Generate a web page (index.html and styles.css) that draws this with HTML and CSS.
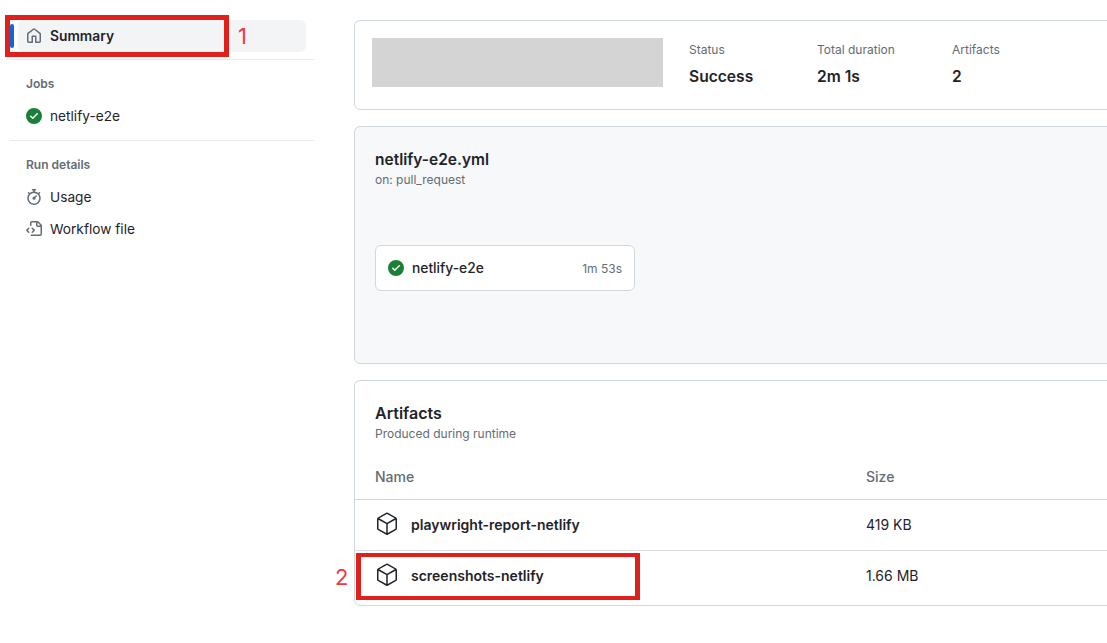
FILE: index.html
```html
<!DOCTYPE html>
<html lang="en">
<head>
<meta charset="utf-8">
<title>Workflow run summary</title>
<link rel="stylesheet" href="styles.css">
</head>
<body>
<div class="page">
  <nav class="sidebar">
    <div class="section section-first">
      <a class="nav-item active">
        <span class="marker"></span>
        <svg class="icon muted" viewBox="0 0 16 16"><path d="M6.906.664a1.749 1.749 0 0 1 2.187 0l5.25 4.2c.415.332.657.835.657 1.367v7.019A1.75 1.75 0 0 1 13.25 15h-3.5a.75.75 0 0 1-.75-.75V9H7v5.25a.75.75 0 0 1-.75.75h-3.5A1.75 1.75 0 0 1 1 13.25V6.23c0-.531.242-1.034.657-1.366l5.25-4.2Zm1.25 1.171a.25.25 0 0 0-.312 0l-5.25 4.2a.25.25 0 0 0-.094.196v7.019c0 .138.112.25.25.25H5.5V8.25a.75.75 0 0 1 .75-.75h3.5a.75.75 0 0 1 .75.75v5.25h2.75a.25.25 0 0 0 .25-.25V6.23a.25.25 0 0 0-.094-.195Z"/></svg>
        <span>Summary</span>
      </a>
    </div>
    <div class="section section-jobs">
      <h2 class="section-title">Jobs</h2>
      <a class="nav-item">
        <svg class="icon success" viewBox="0 0 16 16"><path d="M8 16A8 8 0 1 1 8 0a8 8 0 0 1 0 16Zm3.78-9.72a.751.751 0 0 0-.018-1.042.751.751 0 0 0-1.042-.018L6.75 9.19 5.28 7.72a.751.751 0 0 0-1.042.018.751.751 0 0 0-.018 1.042l2 2a.75.75 0 0 0 1.06 0Z"/></svg>
        <span>netlify-e2e</span>
      </a>
    </div>
    <div class="section">
      <h2 class="section-title">Run details</h2>
      <a class="nav-item">
        <svg class="icon muted" viewBox="0 0 16 16"><path d="M5.75.75A.75.75 0 0 1 6.5 0h3a.75.75 0 0 1 0 1.5h-.75v1l-.001.041a6.724 6.724 0 0 1 3.464 1.435l.007-.006.75-.75a.75.75 0 1 1 1.06 1.06l-.75.75-.006.007a6.75 6.75 0 1 1-10.548 0L2.72 5.03l-.75-.75a.75.75 0 0 1 1.06-1.06l.75.75.007.006A6.72 6.72 0 0 1 7.25 2.541V1.5H6.5a.75.75 0 0 1-.75-.75ZM8 14.5A5.25 5.25 0 1 0 8 4a5.25 5.25 0 0 0 0 10.5Zm.389-6.7 1.33-1.33a.75.75 0 1 1 1.061 1.06L9.45 8.861A1.503 1.503 0 0 1 8 10.75a1.499 1.499 0 1 1 .389-2.95Z"/></svg>
        <span>Usage</span>
      </a>
      <a class="nav-item">
        <svg class="icon muted" viewBox="0 0 16 16"><path d="M4 1.75C4 .784 4.784 0 5.75 0h5.586c.464 0 .909.184 1.237.513l2.914 2.914c.329.328.513.773.513 1.237v8.586A1.75 1.75 0 0 1 14.25 15h-9a.75.75 0 0 1 0-1.5h9a.25.25 0 0 0 .25-.25V6h-2.75A1.75 1.75 0 0 1 10 4.25V1.5H5.75a.25.25 0 0 0-.25.25v2.5a.75.75 0 0 1-1.5 0Zm1.72 4.97a.75.75 0 0 1 1.06 0l2 2a.75.75 0 0 1 0 1.06l-2 2a.749.749 0 0 1-1.275-.326.749.749 0 0 1 .215-.734l1.47-1.47-1.47-1.47a.75.75 0 0 1 0-1.06ZM3.28 7.78 1.81 9.25l1.47 1.47a.751.751 0 0 1-.018 1.042.751.751 0 0 1-1.042.018l-2-2a.75.75 0 0 1 0-1.06l2-2a.751.751 0 0 1 1.042.018.751.751 0 0 1 .018 1.042Zm8.22-6.218V4.25c0 .138.112.25.25.25h2.688l-.011-.013-2.914-2.914-.013-.011Z"/></svg>
        <span>Workflow file</span>
      </a>
    </div>
  </nav>

  <main class="content">
    <section class="card summary">
      <div class="redacted"></div>
      <dl class="stat stat-status"><dt>Status</dt><dd>Success</dd></dl>
      <dl class="stat stat-duration"><dt>Total duration</dt><dd>2m 1s</dd></dl>
      <dl class="stat"><dt>Artifacts</dt><dd>2</dd></dl>
    </section>

    <section class="card graph">
      <h3 class="graph-title">netlify-e2e.yml</h3>
      <p class="subtitle">on: pull_request</p>
      <div class="job">
        <svg class="icon success" viewBox="0 0 16 16"><path d="M8 16A8 8 0 1 1 8 0a8 8 0 0 1 0 16Zm3.78-9.72a.751.751 0 0 0-.018-1.042.751.751 0 0 0-1.042-.018L6.75 9.19 5.28 7.72a.751.751 0 0 0-1.042.018.751.751 0 0 0-.018 1.042l2 2a.75.75 0 0 0 1.06 0Z"/></svg>
        <span class="job-name">netlify-e2e</span>
        <span class="job-time">1m 53s</span>
      </div>
    </section>

    <section class="card artifacts">
      <div class="artifacts-head">
        <h3 class="artifacts-title">Artifacts</h3>
        <p class="subtitle">Produced during runtime</p>
      </div>
      <div class="row row-head"><span class="col-name">Name</span><span>Size</span></div>
      <div class="row row-item">
        <span class="col-name name-cell">
          <svg class="package" viewBox="0 0 24 24"><path d="M12.876.64V.639l8.25 4.763c.541.313.875.89.875 1.515v9.525a1.75 1.75 0 0 1-.875 1.516l-8.25 4.762a1.748 1.748 0 0 1-1.75 0l-8.25-4.763a1.75 1.75 0 0 1-.875-1.515V6.917c0-.625.334-1.202.875-1.515L11.126.64a1.748 1.748 0 0 1 1.75 0Zm-1 1.298L4.251 6.34l7.75 4.474 7.75-4.474-7.625-4.402a.248.248 0 0 0-.25 0Zm.875 19.123 7.625-4.402a.25.25 0 0 0 .125-.216V7.639l-7.75 4.474ZM3.501 7.64v8.803c0 .09.048.172.125.216l7.625 4.402v-8.947Z"/></svg>
          <span>playwright-report-netlify</span>
        </span>
        <span>419 KB</span>
      </div>
      <div class="row row-item row-last">
        <span class="col-name name-cell">
          <svg class="package" viewBox="0 0 24 24"><path d="M12.876.64V.639l8.25 4.763c.541.313.875.89.875 1.515v9.525a1.75 1.75 0 0 1-.875 1.516l-8.25 4.762a1.748 1.748 0 0 1-1.75 0l-8.25-4.763a1.75 1.75 0 0 1-.875-1.515V6.917c0-.625.334-1.202.875-1.515L11.126.64a1.748 1.748 0 0 1 1.75 0Zm-1 1.298L4.251 6.34l7.75 4.474 7.75-4.474-7.625-4.402a.248.248 0 0 0-.25 0Zm.875 19.123 7.625-4.402a.25.25 0 0 0 .125-.216V7.639l-7.75 4.474ZM3.501 7.64v8.803c0 .09.048.172.125.216l7.625 4.402v-8.947Z"/></svg>
          <span>screenshots-netlify</span>
        </span>
        <span>1.66 MB</span>
      </div>
    </section>
  </main>

  <div class="callout-box box-one"></div>
  <div class="callout-num num-one">1</div>
  <div class="callout-box box-two"></div>
  <div class="callout-num num-two">2</div>
</div>
</body>
</html>
```

FILE: styles.css
```css
* { box-sizing: border-box; }
html, body { margin: 0; padding: 0; height: 100%; overflow: hidden; background: #fff; }
body { font-family: Inter, "Liberation Sans", sans-serif; font-size: 14px; color: #1f2328; }

.page { position: relative; display: flex; gap: 40px; width: 1107px; height: 643px; padding-top: 20px; overflow: hidden; }

.sidebar { flex: 0 0 314px; padding-left: 10px; }
.section { border-top: 1px solid #e8eaed; padding: 16px 0 7px; }
.section-first { border-top: 0; padding: 0 8px 7px 0; }
.section-jobs { padding-bottom: 8px; }
.section-title { margin: 0 0 8px 16px; font-size: 12px; line-height: 16px; font-weight: 600; color: #636c76; }

.nav-item { position: relative; display: flex; align-items: center; gap: 8px; height: 32px; margin-left: 8px; padding-left: 8px; border-radius: 6px; font-size: 13.7px; line-height: 20px; }
.active { background: #f3f4f6; font-size: 13.8px; font-weight: 600; }
.marker { position: absolute; left: -8px; top: 4px; width: 4px; height: 24px; border-radius: 2px; background: #1565d8; }

.icon { width: 16px; height: 16px; flex: none; fill: currentColor; }
.muted { color: #636c76; }
.success { color: #1a7f37; }

.content { flex: 0 0 830px; }
.card { border: 1px solid #d0d7de; border-radius: 6px; margin-bottom: 16px; }

.summary { display: flex; height: 90px; padding: 17px; }
.redacted { width: 291px; height: 49px; background: #d4d4d4; margin-right: 26px; }
.stat { margin: 0; padding-top: 4px; width: 128px; }
.stat-duration { width: 135px; }
.stat dt { font-size: 12px; line-height: 16px; color: #636c76; }
.stat dd { margin: 9px 0 0; font-size: 15.6px; line-height: 20px; font-weight: 600; }

.graph { height: 238px; padding: 23px 20px 0; background: #f6f8fa; }
.graph-title { margin: 0; font-size: 15.5px; line-height: 20px; font-weight: 600; }
.subtitle { margin: 1px 0 0; font-size: 12px; line-height: 20px; color: #636c76; }
.graph .subtitle { margin-top: 0; }
.job { display: flex; align-items: center; gap: 8px; width: 260px; height: 46px; margin-top: 55px; padding: 0 12px; background: #fff; border: 1px solid #d0d7de; border-radius: 6px; }
.job-name { flex: 1; font-size: 13.8px; font-weight: 500; }
.job-time { font-size: 12px; color: #636c76; }

.artifacts { height: 226px; margin-bottom: 0; }
.artifacts-head { padding: 22px 20px 0; height: 74px; }
.artifacts-title { margin: 0; font-size: 16px; line-height: 20px; font-weight: 600; }
.row { display: flex; align-items: center; padding-left: 20px; }
.col-name { flex: 0 0 491px; }
.row-head { height: 45px; padding-bottom: 1px; border-bottom: 1px solid #d0d7de; color: #636c76; font-weight: 500; }
.row-item { height: 51px; padding-bottom: 2px; border-bottom: 1px solid #d8dee4; }
.row-last { height: 50px; border-bottom: 0; }
.name-cell { display: flex; align-items: center; gap: 12px; font-weight: 600; }
.package { width: 24px; height: 24px; flex: none; fill: #1f2328; }

.callout-box { position: absolute; border-style: solid; border-color: #e0201b; }
.box-one { left: 5px; top: 15px; width: 224px; height: 42px; border-width: 5px; }
.box-two { left: 356px; top: 553px; width: 284px; height: 47px; border-width: 4px 5px; }
.callout-num { position: absolute; font-size: 22px; line-height: 26px; color: #f4373b; }
.num-one { left: 238px; top: 23px; }
.num-two { left: 335px; top: 564px; }
```
